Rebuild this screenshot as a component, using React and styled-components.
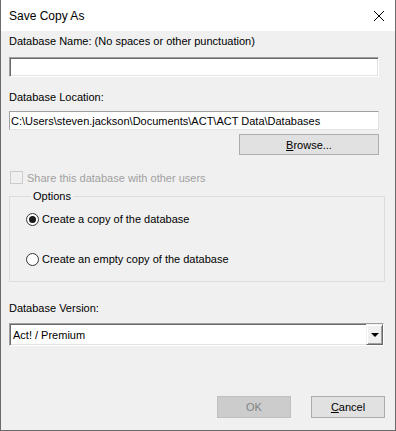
import React from "react"
import styled, { createGlobalStyle } from "styled-components"

const Global = createGlobalStyle`
  html, body {
    margin: 0;
    padding: 0;
    background: #fff;
  }
  body {
    font-family: "Liberation Sans", Arial, sans-serif;
    font-size: 11px;
    color: #000;
  }
`

const Window = styled.div`
  width: 396px;
  height: 431px;
  box-sizing: border-box;
  border: 1px solid #6b6b6b;
  border-top: none;
  display: flex;
  flex-direction: column;
  background: #f0f0f0;
`

const TitleBar = styled.div`
  height: 31px;
  flex: none;
  background: #fff;
  display: flex;
  align-items: center;
  justify-content: space-between;
  padding: 0 10px 0 8px;
  font-size: 12px;
`

const Close = styled.svg`
  width: 12px;
  height: 12px;
`

const Body = styled.div`
  flex: 1;
  display: flex;
  flex-direction: column;
  padding: 4px 10px 0 8px;
`

const Label = styled.div`
  line-height: 13px;
  margin-top: ${p => p.$mt || 0}px;
  color: ${p => (p.$disabled ? "#a0a0a0" : "#000")};
`

const SunkenField = styled.div`
  box-sizing: border-box;
  width: ${p => p.$w}px;
  height: ${p => p.$h}px;
  margin-top: ${p => p.$mt || 0}px;
  background: #fff;
  border-top: 1px solid #a0a0a0;
  border-left: 1px solid #a0a0a0;
  border-right: 1px solid #fff;
  border-bottom: 1px solid #fff;
  box-shadow: inset 1px 1px 0 #696969, inset -1px -1px 0 #e3e3e3;
  display: flex;
  align-items: center;
`

const FlatField = styled.div`
  box-sizing: border-box;
  width: 370px;
  height: 19px;
  margin-top: ${p => p.$mt || 0}px;
  background: #fff;
  border: 1px solid #a0a0a0;
  border-right-color: #e3e3e3;
  border-bottom-color: #e3e3e3;
  padding-left: 1px;
  display: flex;
  align-items: center;
  white-space: nowrap;
`

const Button = styled.div`
  box-sizing: border-box;
  width: ${p => p.$w}px;
  height: ${p => p.$h || 21}px;
  background: ${p => (p.$disabled ? "#cccccc" : "#e1e1e1")};
  border: 1px solid ${p => (p.$disabled ? "#bfbfbf" : "#adadad")};
  color: ${p => (p.$disabled ? "#838383" : "#000")};
  display: flex;
  align-items: center;
  justify-content: center;
  u {
    text-underline-offset: 1px;
  }
`

const BrowseRow = styled.div`
  display: flex;
  justify-content: flex-end;
  width: 370px;
  margin-top: 4px;
`

const CheckRow = styled.div`
  display: flex;
  align-items: center;
  gap: 4px;
  margin-top: 16px;
  color: #a0a0a0;
  margin-left: 1px;
`

const CheckBox = styled.span`
  box-sizing: border-box;
  width: 13px;
  height: 13px;
  border: 1px solid #cccccc;
  background: #f0f0f0;
`

const Group = styled.fieldset`
  box-sizing: border-box;
  width: 376px;
  height: 92px;
  margin: 6px 0 0 0;
  padding: 10px 0 0 16px;
  border: 1px solid #dcdcdc;
  display: flex;
  flex-direction: column;
  gap: 27px;
  legend {
    padding: 0 2px;
    margin-left: 5px;
    line-height: 13px;
  }
`

const RadioRow = styled.label`
  display: flex;
  align-items: center;
  gap: 3px;
  line-height: 13px;
`

const Radio = styled.span`
  box-sizing: border-box;
  width: 13px;
  height: 13px;
  border-radius: 50%;
  border: 1px solid #333;
  background: #fff;
  display: flex;
  align-items: center;
  justify-content: center;
  &::after {
    content: "";
    width: 7px;
    height: 7px;
    border-radius: 50%;
    background: ${p => (p.$checked ? "#1a1a1a" : "transparent")};
  }
`

const ComboText = styled.span`
  flex: 1;
  padding-left: 3px;
`

const DropButton = styled.span`
  box-sizing: border-box;
  width: 17px;
  height: 100%;
  background: #f0f0f0;
  border-top: 1px solid #f0f0f0;
  border-left: 1px solid #f0f0f0;
  border-right: 1px solid #696969;
  border-bottom: 1px solid #696969;
  box-shadow: inset 1px 1px 0 #fff, inset -1px -1px 0 #a0a0a0;
  display: flex;
  align-items: center;
  justify-content: center;
  &::after {
    content: "";
    border-left: 4px solid transparent;
    border-right: 4px solid transparent;
    border-top: 4px solid #000;
  }
`

const Footer = styled.div`
  margin-top: auto;
  display: flex;
  justify-content: flex-end;
  gap: 20px;
  padding: 0 10px 12px 0;
`

export default function App() {
  return (
    <>
      <Global />
      <Window>
        <TitleBar>
          <span>Save Copy As</span>
          <Close viewBox="0 0 12 12">
            <path d="M1 1 L11 11 M11 1 L1 11" stroke="#000" strokeWidth="1" fill="none" />
          </Close>
        </TitleBar>
        <Body>
          <Label $mt={0}>Database Name: (No spaces or other punctuation)</Label>
          <SunkenField $w={370} $h={20} $mt={9} />
          <Label $mt={14}>Database Location:</Label>
          <FlatField $mt={7}>C:\Users\steven.jackson\Documents\ACT\ACT Data\Databases</FlatField>
          <BrowseRow>
            <Button $w={140}>
              <span><u>B</u>rowse...</span>
            </Button>
          </BrowseRow>
          <CheckRow>
            <CheckBox />
            <span>Share this database with other users</span>
          </CheckRow>
          <Group>
            <legend>Options</legend>
            <RadioRow>
              <Radio $checked />
              <span>Create a copy of the database</span>
            </RadioRow>
            <RadioRow>
              <Radio />
              <span>Create an empty copy of the database</span>
            </RadioRow>
          </Group>
          <Label $mt={20}>Database Version:</Label>
          <SunkenField $w={375} $h={23} $mt={8}>
            <ComboText>Act! / Premium</ComboText>
            <DropButton />
          </SunkenField>
        </Body>
        <Footer>
          <Button $w={74} $h={22} $disabled>OK</Button>
          <Button $w={74} $h={22}>
            <span><u>C</u>ancel</span>
          </Button>
        </Footer>
      </Window>
    </>
  )
}
